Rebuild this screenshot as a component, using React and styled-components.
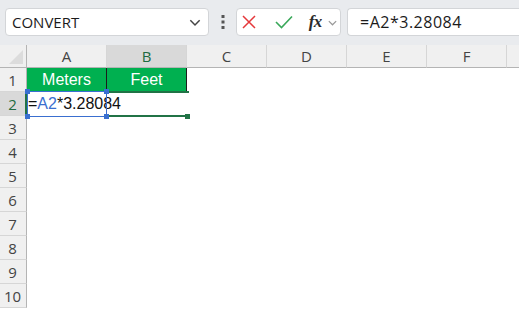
import React from 'react';
import styled, { createGlobalStyle } from 'styled-components';

const GlobalStyle = createGlobalStyle`
  html, body {
    margin: 0;
    padding: 0;
    background: #ffffff;
    font-family: "Open Sans", "Noto Sans", sans-serif;
  }
  * { box-sizing: border-box; }
`;

const Page = styled.div`
  width: 519px;
  height: 311px;
  overflow: hidden;
  background: #ffffff;
`;

const TopBar = styled.div`
  height: 45px;
  background: #e9ebee;
  display: flex;
  align-items: flex-start;
  padding: 8px 0 0 5px;
`;

const NameBox = styled.div`
  width: 204px;
  height: 28px;
  background: #fff;
  border: 1px solid #d3d5d8;
  border-radius: 4px;
  display: flex;
  align-items: center;
  justify-content: space-between;
  padding: 0 6px 0 6px;
  font-size: 15px;
  color: #1b1b1b;
`;

const Dots = styled.div`
  width: 27px;
  height: 28px;
  display: flex;
  align-items: center;
  justify-content: center;
`;

const FxBox = styled.div`
  width: 105px;
  height: 28px;
  background: #fff;
  border: 1px solid #d3d5d8;
  border-radius: 4px;
  display: flex;
  align-items: center;
`;

const IconSlot = styled.div`
  width: ${p => p.$w}px;
  height: 26px;
  display: flex;
  align-items: center;
  justify-content: center;
`;

const Fx = styled.span`
  font-family: "Liberation Serif", "DejaVu Serif", serif;
  font-style: italic;
  font-weight: bold;
  font-size: 17px;
  color: #2b2b2b;
  letter-spacing: -0.5px;
`;

const FormulaInput = styled.div`
  flex: 1;
  height: 28px;
  margin-left: 6px;
  background: #fff;
  border: 1px solid #d3d5d8;
  border-right: none;
  border-radius: 4px 0 0 4px;
  display: flex;
  align-items: center;
  padding-left: 12px;
  font-size: 16px;
  letter-spacing: 0.5px;
  color: #1b1b1b;
`;

const Sheet = styled.div`
  display: grid;
  grid-template-columns: 27px repeat(7, 80px);
  grid-template-rows: 23px repeat(10, 24px);
`;

const Corner = styled.div`
  position: relative;
  background: #f0f0f0;
  border-right: 1px solid #b4b4b4;
  border-bottom: 1px solid #b4b4b4;
  &::after {
    content: '';
    position: absolute;
    right: 3px;
    bottom: 3px;
    border-left: 14px solid transparent;
    border-bottom: 14px solid #dcdcdc;
  }
`;

const ColHead = styled.div`
  background: ${p => (p.$active ? '#d9d9d9' : '#f0f0f0')};
  border-right: 1px solid #d6d6d6;
  border-bottom: 1px solid #b4b4b4;
  display: flex;
  align-items: center;
  justify-content: center;
  font-size: 15px;
  color: ${p => (p.$active ? '#1e6b41' : '#444')};
`;

const RowHead = styled.div`
  background: ${p => (p.$active ? '#d9d9d9' : '#f0f0f0')};
  border-right: ${p => (p.$active ? '2px solid #217346' : '1px solid #b4b4b4')};
  border-bottom: 1px solid #d6d6d6;
  display: flex;
  align-items: center;
  justify-content: center;
  font-size: 15px;
  color: ${p => (p.$active ? '#1e6b41' : '#444')};
  padding-right: ${p => (p.$active ? '0' : '1px')};
`;

const Cell = styled.div`
  position: relative;
  background: ${p => (p.$fill ? '#00b050' : '#fff')};
  color: ${p => (p.$fill ? '#fff' : '#111')};
  border-right: ${p => (p.$edge ? '1px solid #1c1c1c' : 'none')};
  display: flex;
  align-items: center;
  justify-content: ${p => (p.$center ? 'center' : 'flex-start')};
  font-family: "Liberation Sans", Arial, sans-serif;
  font-size: 16px;
  white-space: nowrap;
  overflow: visible;
  z-index: ${p => p.$z || 1};
`;

const FormulaText = styled.span`
  padding-left: 1px;
  color: #111;
`;

const Ref = styled.span`
  color: #3a6fd0;
`;

const Caret = styled.span`
  display: inline-block;
  width: 1px;
  height: 20px;
  background: #000;
  margin-left: 2px;
`;

const RefBox = styled.div`
  position: absolute;
  left: 0;
  top: -1px;
  right: 0;
  bottom: -1px;
  border: 1px solid #3a6fd0;
  pointer-events: none;
`;

const Handle = styled.div`
  position: absolute;
  width: 5px;
  height: 5px;
  background: ${p => p.$color};
  ${p => (p.$v === 'top' ? 'top: -3px;' : 'bottom: -3px;')}
  ${p => (p.$h === 'left' ? 'left: -3px;' : 'right: -3px;')}
`;

const ActiveLine = styled.div`
  position: absolute;
  left: 0;
  right: -2px;
  height: 2px;
  background: #217346;
  ${p => (p.$top ? 'top: -1px;' : 'bottom: -1px;')}
`;

const cols = ['A', 'B', 'C', 'D', 'E', 'F', 'G'];
const rows = [1, 2, 3, 4, 5, 6, 7, 8, 9, 10];

function Chevron({ color = '#555', size = 12 }) {
  return (
    <svg width={size} height={size} viewBox="0 0 12 12">
      <path d="M2 4.5 L6 8.5 L10 4.5" fill="none" stroke={color} strokeWidth="1.3" />
    </svg>
  );
}

function renderCell(col, row) {
  const key = col + row;
  if (row === 1 && (col === 'A' || col === 'B')) {
    return (
      <Cell key={key} $fill $center $edge>
        {col === 'A' ? 'Meters' : 'Feet'}
      </Cell>
    );
  }
  if (row === 2 && col === 'A') {
    return (
      <Cell key={key} $z={3}>
        <FormulaText>
          =<Ref>A2</Ref>*3.28084
        </FormulaText>
        <Caret />
        <RefBox>
          <Handle $color="#3a6fd0" $v="top" $h="left" />
          <Handle $color="#3a6fd0" $v="top" $h="right" />
          <Handle $color="#3a6fd0" $v="bottom" $h="left" />
          <Handle $color="#3a6fd0" $v="bottom" $h="right" />
        </RefBox>
      </Cell>
    );
  }
  if (row === 2 && col === 'B') {
    return (
      <Cell key={key} $z={2}>
        <ActiveLine $top />
        <ActiveLine />
        <Handle $color="#217346" $v="bottom" $h="right" />
      </Cell>
    );
  }
  return <Cell key={key} />;
}

export default function App() {
  return (
    <Page>
      <GlobalStyle />
      <TopBar>
        <NameBox>
          <span>CONVERT</span>
          <Chevron color="#444" size={14} />
        </NameBox>
        <Dots>
          <svg width="4" height="14" viewBox="0 0 4 14">
            <rect x="0.5" y="0" width="3" height="3" fill="#555" />
            <rect x="0.5" y="5.5" width="3" height="3" fill="#555" />
            <rect x="0.5" y="11" width="3" height="3" fill="#555" />
          </svg>
        </Dots>
        <FxBox>
          <IconSlot $w={24}>
            <svg width="14" height="14" viewBox="0 0 14 14">
              <path d="M1 1 L13 13 M13 1 L1 13" stroke="#e5383b" strokeWidth="1.5" />
            </svg>
          </IconSlot>
          <IconSlot $w={46}>
            <svg width="18" height="14" viewBox="0 0 18 14">
              <path d="M1 7 L6.5 12.5 L17 1.5" fill="none" stroke="#3aa85a" strokeWidth="1.6" />
            </svg>
          </IconSlot>
          <IconSlot $w={18}>
            <Fx>fx</Fx>
          </IconSlot>
          <IconSlot $w={16}>
            <Chevron color="#999" size={11} />
          </IconSlot>
        </FxBox>
        <FormulaInput>=A2*3.28084</FormulaInput>
      </TopBar>
      <Sheet>
        <Corner />
        {cols.map(c => (
          <ColHead key={c} $active={c === 'B'}>{c === 'G' ? '' : c}</ColHead>
        ))}
        {rows.map(r => (
          <React.Fragment key={r}>
            <RowHead $active={r === 2}>{r}</RowHead>
            {cols.map(c => renderCell(c, r))}
          </React.Fragment>
        ))}
      </Sheet>
    </Page>
  );
}
